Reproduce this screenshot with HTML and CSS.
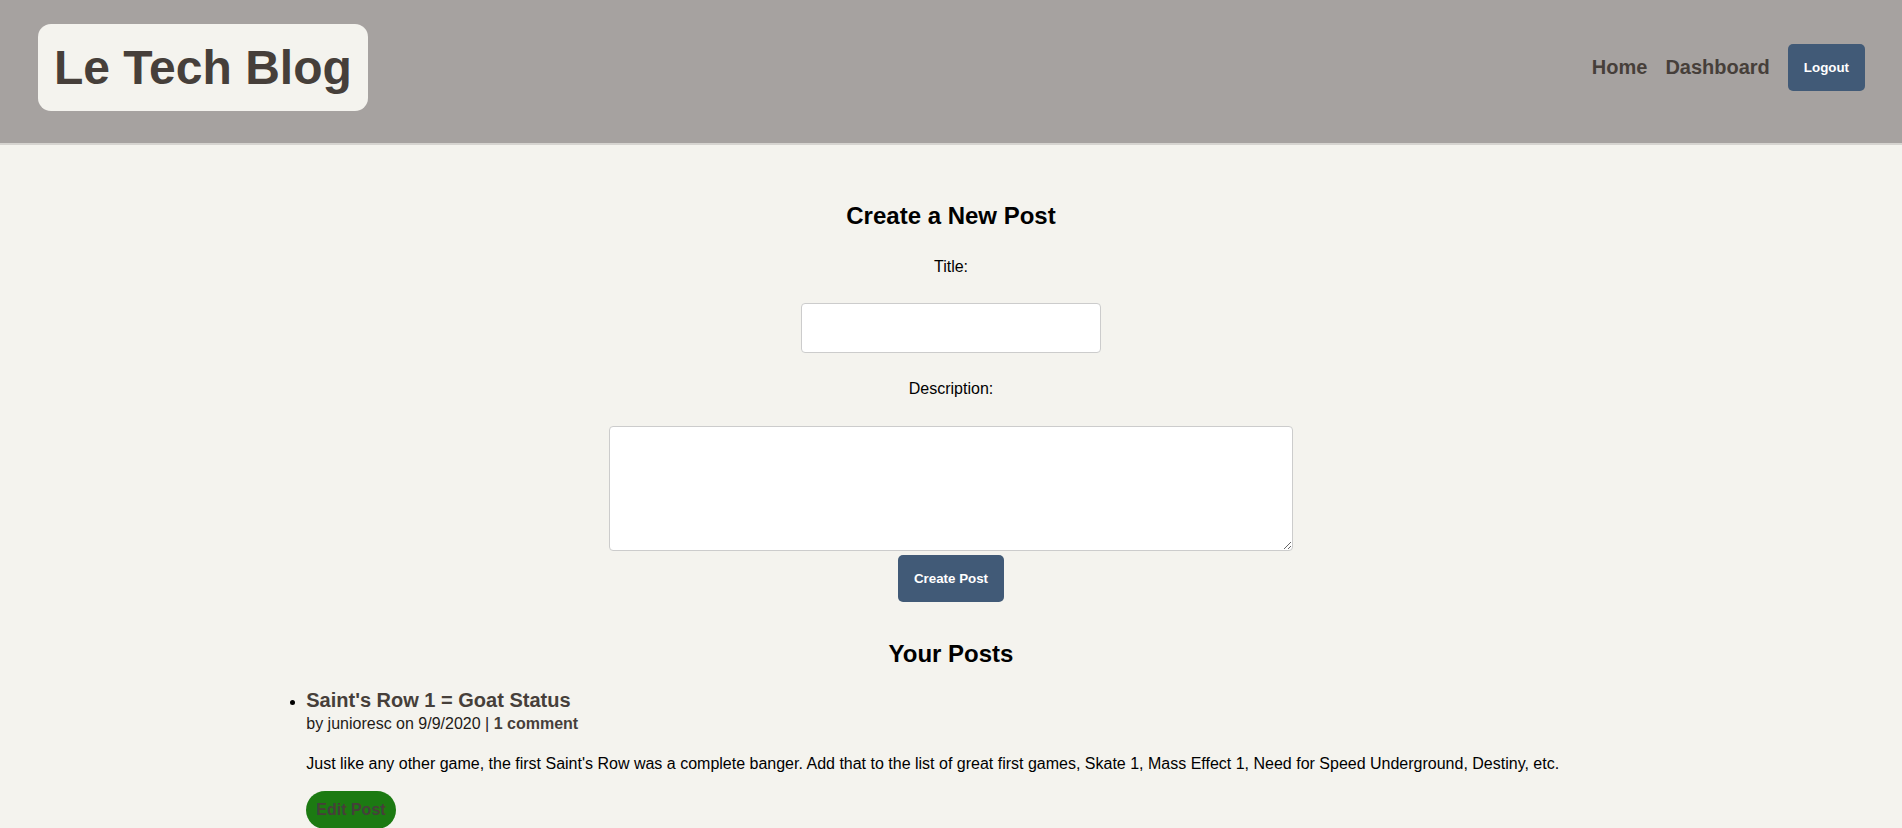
FILE: index.html
```html
<!DOCTYPE html>
<html lang="en">
<head>
<meta charset="utf-8">
<title>Le Tech Blog</title>
<link rel="stylesheet" href="styles.css">
</head>
<body>
<header class="site-header">
  <a class="brand" href="#">Le Tech Blog</a>
  <nav class="nav">
    <a class="nav-link" href="#">Home</a>
    <a class="nav-link" href="#">Dashboard</a>
    <button class="btn" type="button">Logout</button>
  </nav>
</header>
<main class="main">
  <section class="new-post">
    <h2 class="section-title">Create a New Post</h2>
    <form class="post-form">
      <label class="form-label" for="title">Title:</label>
      <input class="form-input" id="title" type="text">
      <label class="form-label" for="desc">Description:</label>
      <textarea class="form-textarea" id="desc"></textarea>
      <button class="btn btn-create" type="button">Create Post</button>
    </form>
  </section>
  <section class="your-posts">
    <h2 class="section-title posts-title">Your Posts</h2>
    <ul class="post-list">
      <li class="post-item">
        <a class="post-title" href="#">Saint's Row 1 = Goat Status</a>
        <div class="post-meta">by junioresc on 9/9/2020 | <a class="post-comments" href="#">1 comment</a></div>
        <p class="post-body">Just like any other game, the first Saint's Row was a complete banger. Add that to the list of great first games, Skate 1, Mass Effect 1, Need for Speed Underground, Destiny, etc.</p>
        <button class="btn-edit" type="button">Edit Post</button>
      </li>
    </ul>
  </section>
</main>
</body>
</html>
```
FILE: styles.css
```css
* {
  box-sizing: border-box;
}

body {
  margin: 0;
  background: #f4f3ee;
  font-family: "Liberation Sans", Arial, sans-serif;
  color: #000;
}

.site-header {
  display: flex;
  align-items: center;
  justify-content: space-between;
  padding: 24px 37px 32px 38px;
  background: #a6a2a0;
  border-bottom: 2px solid #d6d4d0;
}

.brand {
  display: block;
  padding: 16px 16px;
  background: #f4f3ee;
  border-radius: 13px;
  color: #463f3a;
  font-size: 48px;
  font-weight: bold;
  line-height: 55px;
  text-decoration: none;
}

.nav {
  display: flex;
  align-items: center;
  gap: 18px;
}

.nav-link {
  color: #463f3a;
  font-size: 20px;
  font-weight: bold;
  text-decoration: none;
}

.btn {
  padding: 16px;
  border: none;
  border-radius: 5px;
  background: #415a77;
  color: #fff;
  font-family: "Liberation Sans", Arial, sans-serif;
  font-size: 13.33px;
  font-weight: bold;
  line-height: 15px;
}

.main {
  padding: 57px 14% 0;
}

.new-post {
  display: flex;
  flex-direction: column;
  align-items: center;
}

.section-title {
  margin: 0;
  font-size: 24px;
  line-height: 28px;
  text-align: center;
}

.post-form {
  display: flex;
  flex-direction: column;
  align-items: center;
  width: 100%;
  margin-top: 27px;
}

.form-label {
  font-size: 16px;
  line-height: 19px;
}

.form-input {
  width: 300px;
  height: 50px;
  margin: 27px 0 26px;
  border: 1px solid #cccccc;
  border-radius: 4px;
  background: #fff;
}

.form-textarea {
  width: 50%;
  height: 125px;
  margin-top: 28px;
  border: 1px solid #cccccc;
  border-radius: 4px;
  background: #fff;
}

.btn-create {
  margin-top: 4px;
}

.your-posts {
  margin-top: 38px;
}

.post-list {
  margin: 21px 0 0;
  padding-left: 40px;
}

.post-title {
  display: block;
  color: #463f3a;
  font-size: 20px;
  font-weight: bold;
  line-height: 23px;
  text-decoration: none;
}

.post-meta {
  margin-top: 3px;
  font-size: 16px;
  line-height: 18px;
  color: #1f1b18;
}

.post-comments {
  color: #463f3a;
  font-weight: bold;
  text-decoration: none;
}

.post-body {
  margin: 22px 0 18px;
  font-size: 16px;
  line-height: 18px;
}

.btn-edit {
  padding: 10px;
  border: none;
  border-radius: 20px;
  background: #1c7a12;
  color: #463f3a;
  font-family: "Liberation Sans", Arial, sans-serif;
  font-size: 16px;
  font-weight: bold;
  line-height: 18px;
}
```
